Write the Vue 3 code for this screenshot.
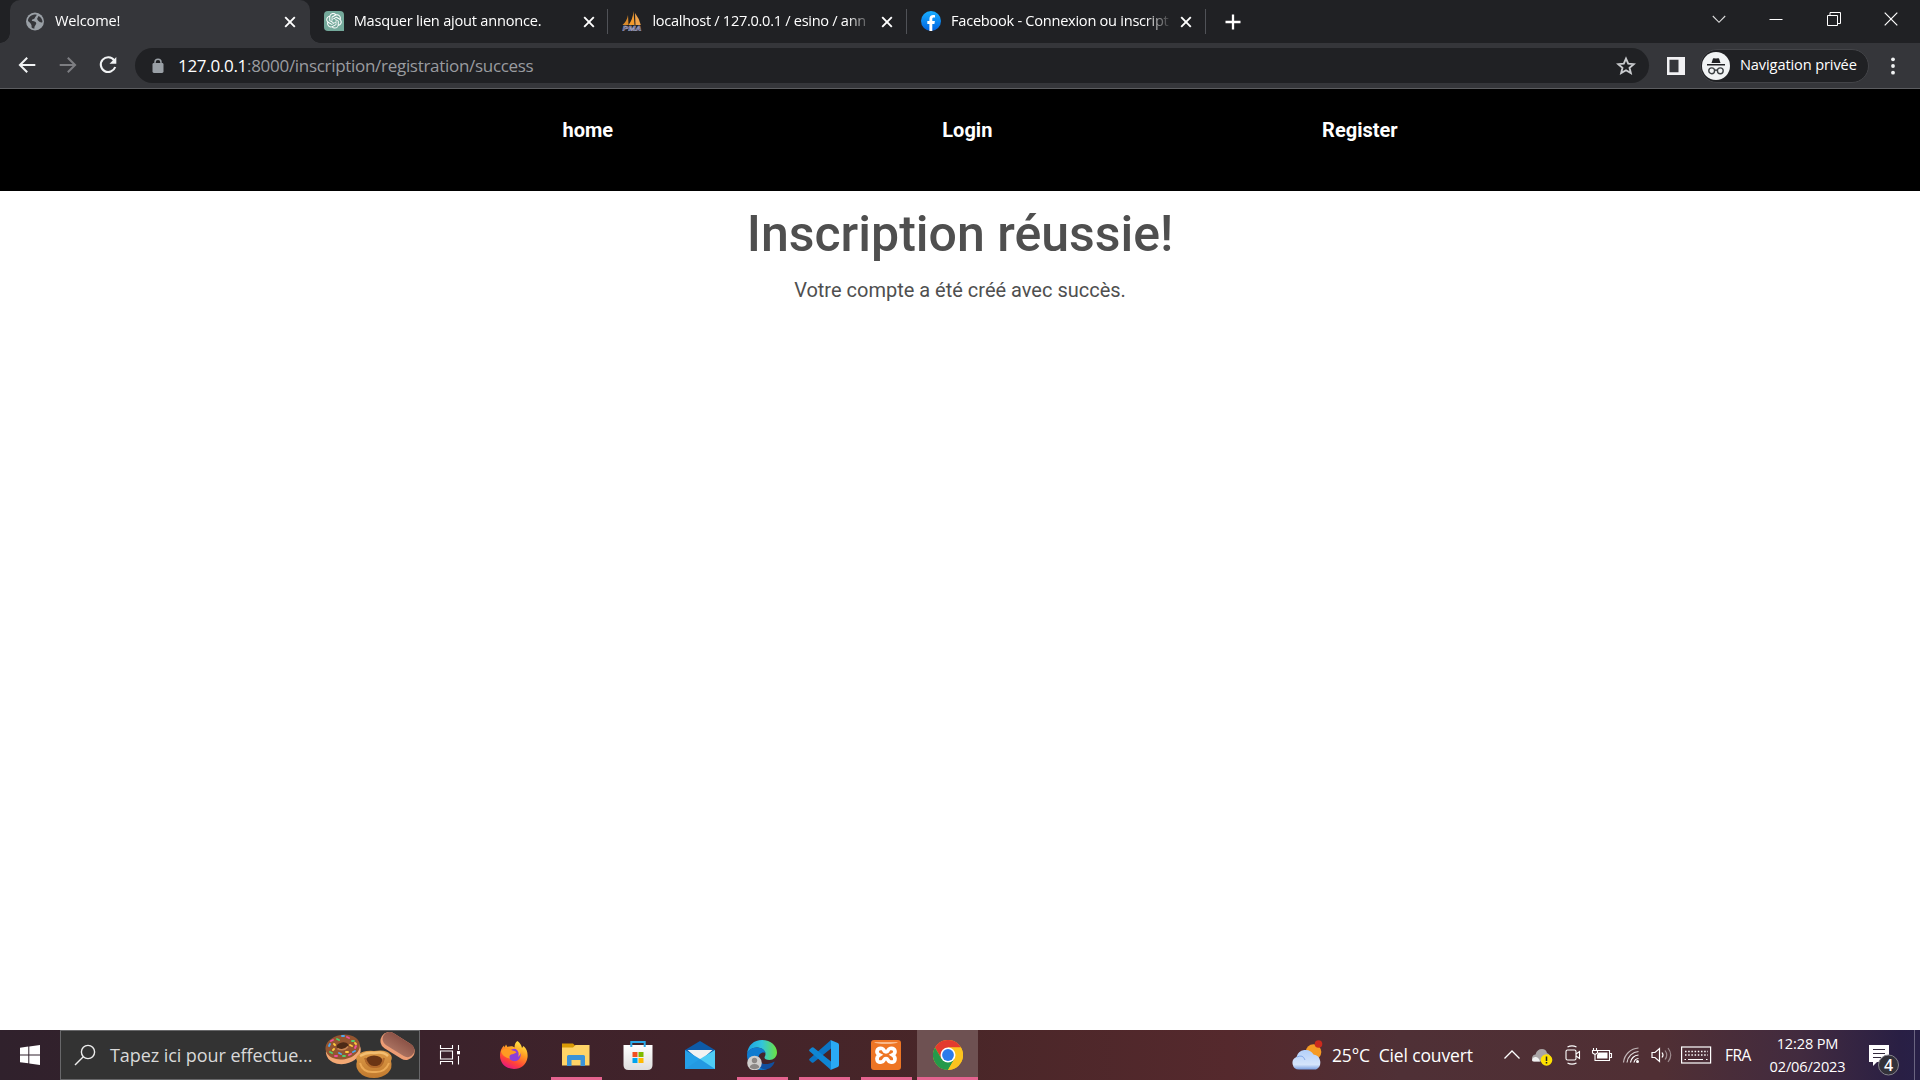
<script setup>
const tabs = [
  { id: 'globe', title: 'Welcome!', active: true, ls: '-0.18px' },
  { id: 'gpt', title: 'Masquer lien ajout annonce.', ls: '-0.22px' },
  { id: 'pma', title: 'localhost / 127.0.0.1 / esino / ann', ls: '-0.3px' },
  { id: 'fb', title: 'Facebook - Connexion ou inscript', ls: '-0.27px' },
]
const links = ['home', 'Login', 'Register']
</script>

<template>
  <div class="screen">
    <div class="strip">
      <div v-for="t in tabs" :key="t.id" class="tab" :class="{ active: t.active }">
        <svg v-if="t.id === 'globe'" class="fav" viewBox="0 0 20 20">
          <circle cx="10" cy="10.5" r="9" fill="#9aa0a6" />
          <path d="M3 10 C3 6 7 3.200 11.500 3.600 C12 5 10 5.500 9.800 7 C9.500 8.300 7 8 6.800 9.300 C6.900 10.600 10.500 9.800 11.200 12 C11.500 14 9 14.500 9.500 17.600 C8 17.500 7 17 6.500 16.300 C7.300 14 5.500 12 3 10Z M13.500 5 C16 6 17.500 8.500 17.500 11 C16.500 12.200 14.500 11 13.500 10 C12.500 8.800 11.500 7.800 12.500 7Z" fill="#35363a" />
        </svg>
        <svg v-else-if="t.id === 'gpt'" class="fav" viewBox="0 0 20 20">
          <path d="M4 0H16A4 4 0 0 1 20 4V20H4A4 4 0 0 1 0 16V4A4 4 0 0 1 4 0Z" fill="#74a99b" />
          <path transform="translate(2.200 2) scale(.65)" fill="#fff" d="M22.2819 9.8211a5.9847 5.9847 0 0 0-.5157-4.9108 6.0462 6.0462 0 0 0-6.5098-2.9A6.0651 6.0651 0 0 0 4.9807 4.1818a5.9847 5.9847 0 0 0-3.9977 2.9 6.0462 6.0462 0 0 0 .7427 7.0966 5.98 5.98 0 0 0 .511 4.9107 6.051 6.051 0 0 0 6.5146 2.9001A5.9847 5.9847 0 0 0 13.2599 24a6.0557 6.0557 0 0 0 5.7718-4.2058 5.9894 5.9894 0 0 0 3.9977-2.9001 6.0557 6.0557 0 0 0-.7475-7.073zm-9.022 12.6081a4.4755 4.4755 0 0 1-2.8764-1.0408l.1419-.0804 4.7783-2.7582a.7948.7948 0 0 0 .3927-.6813v-6.7369l2.02 1.1686a.071.071 0 0 1 .038.0615v5.5826a4.504 4.504 0 0 1-4.4945 4.4944zm-9.6607-4.1254a4.4708 4.4708 0 0 1-.5346-3.0137l.142.0852 4.783 2.7582a.7712.7712 0 0 0 .7806 0l5.8428-3.3685v2.3324a.0804.0804 0 0 1-.0332.0615L9.74 19.9502a4.4992 4.4992 0 0 1-6.1408-1.6464zM2.3408 7.8956a4.485 4.485 0 0 1 2.3655-1.9728V11.6a.7664.7664 0 0 0 .3879.6765l5.8144 3.3543-2.0201 1.1685a.0757.0757 0 0 1-.071 0l-4.8303-2.7865A4.504 4.504 0 0 1 2.3408 7.872zm16.5963 3.8558L13.1038 8.364 15.1192 7.2a.0757.0757 0 0 1 .071 0l4.8303 2.7913a4.4944 4.4944 0 0 1-.6765 8.1042v-5.6772a.79.79 0 0 0-.407-.667zm2.0107-3.0231l-.142-.0852-4.7735-2.7818a.7759.7759 0 0 0-.7854 0L9.409 9.2297V6.8974a.0662.0662 0 0 1 .0284-.0615l4.8303-2.7866a4.4992 4.4992 0 0 1 6.6802 4.66zM8.3065 12.863l-2.02-1.1638a.0804.0804 0 0 1-.038-.0567V6.0742a4.4992 4.4992 0 0 1 7.3757-3.4537l-.142.0805L8.704 5.459a.7948.7948 0 0 0-.3927.6813zm1.0976-2.3654l2.602-1.4998 2.6069 1.4998v2.9994l-2.5974 1.4997-2.6067-1.4997Z" />
        </svg>
        <svg v-else-if="t.id === 'pma'" class="fav" viewBox="0 0 20 20">
          <path d="M6 4 L6.500 14 H.5 Q5 10 6 4Z" fill="#d98a2b" />
          <path d="M11.500 0 L12.500 14 H6.500 Q11 8 11.500 0Z" fill="#f39a2c" />
          <path d="M13 2 Q17 7 18.800 14 H13.500Z" fill="#f0a34a" />
          <text x="10" y="19.600" text-anchor="middle" textLength="19" lengthAdjust="spacingAndGlyphs" font-family="Liberation Sans" font-weight="bold" font-style="italic" font-size="8" fill="#33345e" stroke="#b4b4d0" stroke-width=".5">PMA</text>
        </svg>
        <svg v-else class="fav" viewBox="0 0 20 20">
          <defs><linearGradient id="fbg" x2="0" y2="1"><stop stop-color="#19afff" /><stop offset="1" stop-color="#0062e0" /></linearGradient></defs>
          <circle cx="10" cy="10" r="10" fill="url(#fbg)" />
          <path d="M8.400 19.900 V12.900 H6.300 V10 H8.400 V8 C8.400 5.300 10 4 12.200 4 C13 4 14 4.200 14 4.200 V6.600 H12.700 C11.600 6.600 11.300 7.300 11.300 8.100 V10 H13.900 L13.400 12.900 H11.300 V19.900Z" fill="#fff" />
        </svg>
        <span class="title" :style="{ letterSpacing: t.ls }">{{ t.title }}</span>
        <svg class="x" viewBox="0 0 12 12"><path d="M1.200 1.200 10.800 10.800 M10.800 1.200 1.200 10.800" stroke="#fff" stroke-width="1.900" /></svg>
      </div>
      <svg class="plus" viewBox="0 0 16 16"><path d="M8 .5V15.500M.5 8H15.500" stroke="#fff" stroke-width="2.300" /></svg>
      <div class="controls">
        <svg viewBox="0 0 14 14"><path d="M.8 4 7 10.300 13.200 4" stroke="#ddd" fill="none" stroke-width="1.100" /></svg>
        <svg viewBox="0 0 14 14"><path d="M.5 7.500H13.500" stroke="#fff" /></svg>
        <svg viewBox="0 0 14 14"><path d="M.5 3.500H10.500V13.500H.5ZM3 3V.5H13.500V11.500H11" stroke="#fff" fill="none" /></svg>
        <svg viewBox="0 0 14 14"><path d="M.7 .7 13.300 13.300M13.300 .7 .7 13.300" stroke="#fff" stroke-width="1.200" /></svg>
      </div>
    </div>

    <div class="toolbar">
      <svg class="nav" viewBox="0 0 20 20"><path d="M18.300 10H3M10.200 2.700 2.900 10l7.300 7.300" stroke="#f1f3f4" fill="none" stroke-width="2" /></svg>
      <svg class="nav" viewBox="0 0 20 20"><path d="M1.700 10H17M9.800 2.700 17.100 10l-7.300 7.300" stroke="#7d7e82" fill="none" stroke-width="2" /></svg>
      <svg class="nav" viewBox="0 0 20 20"><path d="M16.200 5.300A7.400 7.400 0 1 0 17.200 12" stroke="#f1f3f4" fill="none" stroke-width="2.100" /><path d="M18.300 2V8.800H11.500Z" fill="#f1f3f4" /></svg>
      <div class="omnibox">
        <svg class="lock" viewBox="0 0 12 16"><path d="M3 6.500V4.200a3 3 0 0 1 6 0V6.500" stroke="#9aa0a6" fill="none" stroke-width="1.500" /><rect x=".5" y="5" width="11" height="10" rx="1.400" fill="#9aa0a6" /></svg>
        <span class="url"><b>127.0.0.1</b>:8000/inscription/registration/success</span>
        <svg class="star" viewBox="0 0 20 20"><path d="M10 3.200 12 7.900 17 8.300 13.200 11.600 14.400 16.500 10 13.900 5.600 16.500 6.800 11.600 3 8.300 8 7.900Z" stroke="#c9cbce" fill="none" stroke-width="1.700" /></svg>
      </div>
      <svg class="panel" viewBox="0 0 18 18"><path d="M0 0H18V18H0ZM2.500 2.800V15.200H11.500V2.800Z" fill="#f1f1f3" fill-rule="evenodd" /></svg>
      <div class="incog">
        <svg viewBox="0 0 28 28">
          <circle cx="14" cy="14" r="14" fill="#f1f3f4" />
          <path d="M9.500 11 11 6.600Q11.200 6 12 6.200L14 6.600 16 6.200Q16.800 6 17 6.600L18.500 11Z M5 12H23V13.600H5Z" fill="#202124" />
          <g fill="none" stroke="#3c4043" stroke-width="1.400"><circle cx="9.700" cy="18.800" r="2.900" /><circle cx="18.300" cy="18.800" r="2.900" /><path d="M12.600 18.500Q14 17.500 15.400 18.500" /></g>
        </svg>
        <span>Navigation privée</span>
      </div>
      <svg class="dots" viewBox="0 0 4 18"><g fill="#f1f3f4"><circle cx="2" cy="2.300" r="1.900" /><circle cx="2" cy="9" r="1.900" /><circle cx="2" cy="15.700" r="1.900" /></g></svg>
    </div>

    <nav class="sitenav"><a v-for="l in links" :key="l">{{ l }}</a></nav>
    <main>
      <h1>Inscription réussie!</h1>
      <p>Votre compte a été créé avec succès.</p>
    </main>

    <footer class="taskbar">
      <div class="start"><svg width="20" height="20" viewBox="0 0 20 20"><path d="M0 2.800 8.300 1.600V9.400H0ZM9.300 1.400 20 0V9.400H9.300ZM0 10.400H8.300V18.300L0 17.200ZM9.300 10.400H20V20L9.300 18.500Z" fill="#fff" /></svg></div>
      <div class="search">
        <svg width="22" height="22" viewBox="0 0 22 22"><g fill="none" stroke="#eee" stroke-width="1.400"><circle cx="14" cy="8" r="6.600" /><path d="M9.300 12.700 1 21" /></g></svg>
        <span>Tapez ici pour effectue...</span>
        <svg class="donuts" width="91" height="48" viewBox="0 0 91 48">
          <defs>
            <linearGradient id="ecl" x2="0" y2="1"><stop stop-color="#8c5347" /><stop offset="1" stop-color="#a8705f" /></linearGradient>
            <linearGradient id="old" x2="0" y2="1"><stop stop-color="#dd9a47" /><stop offset="1" stop-color="#c17a2f" /></linearGradient>
          </defs>
          <g transform="rotate(-10 18 17)">
            <ellipse cx="18" cy="19" rx="17.500" ry="13" fill="#f3a873" />
            <ellipse cx="18" cy="15" rx="17.300" ry="12.300" fill="#935530" />
            <ellipse cx="18" cy="14" rx="6" ry="3.600" fill="#4d2a16" />
            <path d="M12.500 15.500Q18 20 23.500 15.500" stroke="#c98552" stroke-width="1.500" fill="none" />
          </g>
          <g stroke-width="1.900" stroke-linecap="round">
            <path d="M6 9l2-1M22 5l2 1M30 16l1-2M10 24l2 0M24 23l2-1" stroke="#f04f9c" />
            <path d="M12 7l2 1M27 9l2 0M5 20l2 1M18 24l2 0" stroke="#51d06b" />
            <path d="M17 4l2 0M4 14l1-2M28 20l2-1M14 21l2 1" stroke="#4da8f0" />
            <path d="M9 12l1 1M25 13l2 1M8 18l1-1M21 20l2 0M30 11l1 1" stroke="#ffc93e" />
          </g>
          <g transform="rotate(32 72 14)">
            <rect x="54" y="5" width="37" height="17.500" rx="8.500" fill="#ed9c74" />
            <rect x="55" y="5" width="35" height="14" rx="7" fill="url(#ecl)" />
          </g>
          <path d="M33 23Q38 18 49 19Q61 17 65 22Q68 25 66 29Q68 36 63 41Q57 46 49 46Q39 46 34 40Q30 35 32 29Q30 26 33 23Z" fill="url(#old)" />
          <path d="M35 24Q42 20 49 21Q58 19 63 24" fill="none" stroke="#f2bd70" stroke-width="2.500" />
          <ellipse cx="49" cy="29" rx="8.500" ry="5.500" fill="#6b3514" />
          <path d="M40 26Q43 36 50 35Q57 36 59 26" fill="none" stroke="#b2692b" stroke-width="2" />
          <path d="M35 31Q38 41 49 40Q60 41 64 31" fill="none" stroke="#eba955" stroke-width="2" />
        </svg>
      </div>
      <div class="view"><svg width="22" height="20" viewBox="0 0 22 20"><g stroke="#fff" fill="none" stroke-width="1.100"><path d="M1.500 0V3.500H13.500V0M1.500 19.500V16.500H13.500V19.500M1.500 6H13.500V14H1.500ZM19.500 0V5M19.500 11V19.500" /></g><path d="M18 6H21V9.300H18Z" fill="#fff" /></svg></div>

      <div class="app"><svg viewBox="0 0 30 30">
        <defs><linearGradient id="ff" x1=".8" x2=".3" y2="1"><stop stop-color="#fff24a" /><stop offset=".4" stop-color="#ff9a22" /><stop offset=".75" stop-color="#ff4139" /><stop offset="1" stop-color="#e31587" /></linearGradient></defs>
        <path d="M18.500 1C21 3 22.500 5 23 8L24.500 6C28 9 29 13 28.500 17.500C27.500 24.500 22 29 15 29C7 29 1 23.500 1 15.500C1 11 2.500 8 5 5.500L5.500 7.500L7 4.500L8.500 7C11 6 14 6 15.500 7.500C15.500 4.500 16.500 2 18.500 1Z" fill="url(#ff)" />
        <circle cx="15.500" cy="15" r="6.200" fill="#8c3fd8" /><path d="M1.800 11Q6 7 13.500 10.500Q17 11 17.500 12.500Q14 14.500 12 14.500Q9.500 16 11 18.500Q4 18 1.800 11Z" fill="#ff9a22" /><path d="M17 9Q21 12 19 17Q24 13 20 8Z" fill="#ffb52e" />
      </svg></div>
      <div class="app open"><svg viewBox="0 0 30 30"><path d="M1 3.500H12L14.500 6H26V12H1Z" fill="#d99a05" /><path d="M1 7.500H12L14.500 5H28.500V25.500H1Z" fill="#ffd467" /><path d="M6 26V16.500Q6 15 7.500 15H22.500Q24 15 24 16.500V26H19.500V20H10.500V26Z" fill="#3b93d8" /></svg></div>
      <div class="app"><svg viewBox="0 0 30 30"><defs><linearGradient id="ms" x2="0" y2="1"><stop stop-color="#fff" /><stop offset="1" stop-color="#dedede" /></linearGradient></defs><path d="M.5 5H29.500V25Q29.500 30 24.500 30H5.500Q.5 30 .5 25Z" fill="url(#ms)" /><path d="M8.300 7V2H21.700V7" fill="none" stroke="#29a9ea" stroke-width="2" /><path d="M9.500 12H14.500V17H9.500Z" fill="#f25022" /><path d="M15.500 12H20.500V17H15.500Z" fill="#7fba00" /><path d="M9.500 18H14.500V23H9.500Z" fill="#00a4ef" /><path d="M15.500 18H20.500V23H15.500Z" fill="#ffb900" /></svg></div>
      <div class="app"><svg viewBox="0 0 30 30"><path d="M0 10 15 1 30 10V20H0Z" fill="#0d5aa7" /><path d="M2.500 10H27.500L15 21Z" fill="#f2f2f2" /><path d="M0 10 15 19V29H0Z" fill="#25a0e8" /><path d="M30 10 15 19 15 29H30Z" fill="#4fcdf6" /><path d="M15 19 30 29H0Z" fill="#2399e2" /></svg></div>
      <div class="app open"><svg viewBox="0 0 30 30">
        <defs><linearGradient id="ed"><stop stop-color="#1ba1e2" /><stop offset=".5" stop-color="#32c5dc" /><stop offset="1" stop-color="#6be33f" /></linearGradient></defs>
        <path d="M0 14C1 5 7 0 15 0C24 0 30 6 30 12.500C30 17 26.500 20 22.500 20C19 20 17.500 19 17.500 17.500C17.500 16.500 18.500 16 18.500 14C18.500 10 14 7.500 10 7.500C5 7.500 1 10.500 0 14Z" fill="url(#ed)" />
        <path d="M0 15C0 10 5 7.500 10 7.500C14.500 7.500 18 10 18.500 13C15 11.500 11.500 14 11.500 18C11.500 24 16 28 21 28.500C19 29.600 17 30 15 30C6 30 0 23.500 0 15Z" fill="#0f7bd0" />
        <path d="M12 16C11 23 17 27 27.500 21.500C27.500 24 24 29 18.500 29.500C10 29 7 20 12 16Z" fill="#114f9e" />
        <circle cx="7.500" cy="23" r="7.300" fill="#d0cecc" /><circle cx="7.500" cy="20.500" r="2.700" fill="#8b8785" /><path d="M2.700 27.500Q3 24 7.500 24T12.300 27.500Q7.500 31 2.700 27.500Z" fill="#8b8785" />
      </svg></div>
      <div class="app open"><svg viewBox="0 0 30 30"><path d="M22 0V8.500L4.500 22.500Q3.500 23.200 2.500 22.300L.5 20.500Q-.3 19.500 .6 18.700Z" fill="#0b74c4" /><path d="M22 30V21.500L4.500 7.500Q3.500 6.800 2.500 7.700L.5 9.500Q-.3 10.500 .6 11.300Z" fill="#0f86d4" /><path d="M21.500 0 28.800 3Q30 3.600 30 5V25Q30 26.400 28.800 27L21.500 30Q22 29.500 22 28V2Q22 .5 21.500 0Z" fill="#2aaaf5" /></svg></div>
      <div class="app open"><svg viewBox="0 0 30 30"><rect width="30" height="30" rx="3" fill="#ee7524" /><path d="M3 2H27Q25 4 15 4T3 2Z" fill="#f9b88a" /><path d="M11 8.500C5.500 7.500 4.500 13 8.500 15C4.500 17.500 5.500 23 10.500 22C13.500 21.500 12.500 18.500 15 18.500C17.500 18.500 16.500 21.500 19.500 22C24.500 23 25.500 17.500 21.500 15C25.500 13 24.500 7.500 19 8.500C16.500 9 17.500 12 15 12C12.500 12 13.500 9 11 8.500Z" fill="none" stroke="#fff" stroke-width="3.700" /></svg></div>
      <div class="app open current"><svg viewBox="0 0 30 30"><circle cx="15" cy="15" r="15" fill="#fcc31e" /><path d="M2 7.500A15 15 0 0 1 28 7.500H15L8.500 18.700Z" fill="#e33b2e" /><path d="M2 7.500A15 15 0 0 0 15 30L21.500 18.700H8.500Z" fill="#24994a" /><path d="M15 7.500H28A15 15 0 0 1 15 30L21.500 18.700Z" fill="#fcc31e" /><circle cx="15" cy="15" r="7.500" fill="#fff" /><circle cx="15" cy="15" r="5.900" fill="#2b7bea" /></svg></div>

      <div class="weather">
        <svg width="31" height="31" viewBox="0 0 31 31">
          <defs><linearGradient id="cl" x2="0" y2="1"><stop stop-color="#b3d0fa" /><stop offset=".75" stop-color="#d5e4fb" /><stop offset="1" stop-color="#7a9fe0" /></linearGradient></defs>
          <circle cx="21.500" cy="12" r="7.800" fill="#f59a24" /><circle cx="26.500" cy="4" r="3.800" fill="#cb2a1d" />
          <path d="M7 29.500A6.500 6.500 0 0 1 4.500 17A9.300 9.300 0 0 1 21.500 14.500A8 8 0 0 1 24 29.500Z" fill="url(#cl)" />
          <path d="M5 17Q11 14 13 20" stroke="#84abea" fill="none" />
        </svg>
        <span>25°C&nbsp; Ciel couvert</span>
      </div>

      <div class="tray">
        <svg style="width:30px" viewBox="0 0 30 24"><path d="M7.500 15.500 15 8 22.500 15.500" stroke="#fff" fill="none" stroke-width="1.300" /></svg>
        <svg style="width:31px" viewBox="0 0 31 24"><path d="M7 18.500Q4.500 18 5 14.500Q6 11.500 8.500 11.500Q10 6 15 6Q19 6 20 10Q23 11 23 14V18.500Z" fill="#a9a4a5" /><path d="M5 17Q6 13.500 9 14Q12 14.500 13 18.500H7Q5 18.500 5 17Z" fill="#f1f1f1" /><circle cx="19.500" cy="17" r="5.800" fill="#ffe100" /><path d="M19.500 13.500V18M19.500 19V20.500" stroke="#222" stroke-width="1.500" /></svg>
        <svg style="width:30px" viewBox="0 0 30 24"><g stroke="#fff" fill="none" stroke-width="1.100"><rect x="8" y="7" width="10" height="10" rx="1.500" /><path d="M18 11 21.500 8.500V15.500L18 13M9.500 4Q14 1.700 18.500 4M9.500 20Q14 22.300 18.500 20" /></g></svg>
        <svg style="width:30px" viewBox="0 0 30 24"><path d="M10 7.500H21.500V17.500H6.500M22 10.500H23.500V14.500H22M5.500 5V7M8.500 5V7M4.500 7.500H9.500V10L7 11.500 4.500 10ZM7 11.500V17.500" stroke="#fff" fill="none" stroke-width="1.100" /><path d="M10.500 9.500H19.500V15.500H9V12Z" fill="#fff" /></svg>
        <svg style="width:30px" viewBox="0 0 30 24"><g stroke="#fff" fill="none" stroke-width="1.200"><path d="M16 19.500A5 5 0 0 1 20.500 15.500" /><path d="M12.500 19.500A8.500 8.500 0 0 1 20.500 12" /><path d="M9 19.500A12.500 12.500 0 0 1 20.500 8.500" opacity=".8" /><path d="M5.500 19.500A16 16 0 0 1 20.500 5" opacity=".65" /></g><circle cx="19.500" cy="18.500" r="1.500" fill="#fff" /></svg>
        <svg style="width:28px" viewBox="0 0 28 24"><g stroke="#fff" fill="none" stroke-width="1.200"><path d="M4 9.500H7L11.500 5.500V18.500L7 14.500H4Z" /><path d="M14 9.500Q16 12 14 14.500" /><path d="M17 7.500Q20.500 12 17 16.500M20 5Q25.500 12 20 19" opacity=".45" /></g></svg>
        <svg style="width:38px" viewBox="0 0 38 24"><rect x="5.600" y="4" width="29" height="16" fill="none" stroke="#fff" stroke-width="1.200" /><path d="M9 8.500H32M9 12H32" stroke="#fff" stroke-width="1.300" stroke-dasharray="1.500 1.700" /><path d="M12 16.500H27M8.500 16.500H10M30 16.500H31.500" stroke="#fff" stroke-width="1.200" /></svg>
      </div>
      <span class="lang">FRA</span>
      <div class="clock"><span>12:28 PM</span><span>02/06/2023</span></div>
      <div class="notif">
        <svg width="32" height="32" viewBox="0 0 32 32"><path d="M0 0H20V17H8L4 21V17H0Z" fill="#fff" /><path d="M4 4.500H16M4 8.500H16M4 12.500H12" stroke="#332a3d" stroke-width="1.200" /><circle cx="19.500" cy="20" r="10" fill="#33323a" stroke="#85838b" /><text x="19.500" y="25.500" text-anchor="middle" font-family="Open Sans" font-weight="600" font-size="16" fill="#fff">4</text></svg>
      </div>
      <div class="peek"></div>
    </footer>
  </div>
</template>

<style>
body { margin: 0; overflow: hidden; }
</style>

<style scoped>
* { box-sizing: border-box; }
svg { flex: none; display: block; }
span { white-space: nowrap; }
.screen { width: 1920px; height: 1080px; display: flex; flex-direction: column; background: #fff; font-family: "Open Sans", "Noto Sans", sans-serif; overflow: hidden; }

.strip { height: 43px; flex: none; background: #202124; display: flex; align-items: center; padding-left: 10px; }
.tab { position: relative; width: 298.700px; height: 43px; display: flex; align-items: center; padding-left: 15px; flex: none; color: #fff; }
.tab:not(.active)::after { content: ""; position: absolute; right: -1px; top: 9px; width: 1px; height: 25px; background: #505257; }
.tab.active { background: #35363a; border-radius: 10px 10px 0 0; width: 300px; margin-right: -1.300px; }
.tab.active::before, .tab.active::after { content: ""; position: absolute; bottom: 0; width: 10px; height: 10px; }
.tab.active::before { left: -10px; background: radial-gradient(circle at 0 0, transparent 9.500px, #35363a 10px); }
.tab.active::after { right: -10px; background: radial-gradient(circle at 100% 0, transparent 9.500px, #35363a 10px); }
.fav { width: 20px; height: 20px; margin-top: -1px; }
.title { margin-left: 10px; width: 221px; font-size: 14.600px; line-height: 22px; margin-top: -3px; -webkit-mask-image: linear-gradient(90deg, #000 195px, transparent 221px); }
.x { width: 12px; height: 12px; margin-left: 8px; }
.plus { width: 16px; height: 16px; margin-left: 20.500px; }
.controls { margin-left: auto; display: flex; gap: 43.500px; padding-right: 22px; margin-top: -6px; }
.controls svg { width: 14px; height: 14px; }

.toolbar { height: 46px; flex: none; background: #35363a; border-bottom: 1px solid #5c5d60; display: flex; align-items: center; padding-left: 17px; }
.nav { width: 20px; height: 20px; margin-right: 20.500px; margin-top: -1px; }
.nav + .nav + .nav { margin-right: 17px; }
.omnibox { width: 1514px; height: 35px; border-radius: 18px; background: #202124; display: flex; align-items: center; padding-left: 17px; flex: none; }
.lock { width: 12px; height: 16px; }
.url { margin-left: 14px; font-size: 17px; letter-spacing: -.3px; color: #9a9ca0; line-height: 24px; }
.url b { font-weight: 400; color: #fff; }
.star { width: 22px; height: 22px; margin-left: auto; margin-right: 12px; }
.panel { width: 18px; height: 18px; margin-left: 18px; }
.incog { margin-left: 15px; width: 169px; height: 34px; border-radius: 17px; border: 1px solid #434448; background: #202124; display: flex; align-items: center; padding-left: 1px; color: #fff; font-size: 14.600px; letter-spacing: -.12px; }
.incog svg { width: 28px; height: 28px; }
.incog span { margin-left: 10px; margin-top: -3px; }
.dots { width: 4px; height: 18px; margin-left: 21.500px; }

.sitenav { height: 102px; flex: none; background: #000; display: grid; grid-template-columns: repeat(3, 379.800px); padding: 29px 0 0 562.500px; }
.sitenav a { color: #fff; font: 700 20px/24px Roboto, sans-serif; }
main { flex: 1; text-align: center; color: #4f4f4f; font-family: Roboto, sans-serif; }
h1 { margin: 13px 0 0; font-size: 50px; line-height: 60px; font-weight: 500; }
p { margin: 10px 0 0; font-size: 20px; line-height: 32px; }

.taskbar { height: 50px; flex: none; display: flex; align-items: stretch; background: linear-gradient(90deg, #30212c 0, #3b222b 450px, #42232a 700px, #492628 950px, #55292d 1230px, #4f3036 1400px, #502f34 1660px, #422b3f 1800px, #291f44 1900px, #282047 1920px); color: #fff; }
.start { width: 60px; display: flex; align-items: center; justify-content: center; }
.search { position: relative; width: 360px; border: 1px solid #68686a; background: #333; display: flex; align-items: center; padding-left: 13px; color: #d9d9d9; font-size: 18px; }
.search span { margin-left: 14px; letter-spacing: -.07px; }
.donuts { position: absolute; right: 3px; top: 1px; }
.view { width: 60px; display: flex; align-items: center; justify-content: center; margin-right: 3px; }
.app { position: relative; width: 62px; display: flex; align-items: center; justify-content: center; }
.app svg { width: 30px; height: 30px; }
.app.open::after { content: ""; position: absolute; left: 6px; right: 5px; bottom: 0; height: 3px; background: #e4638f; }
.app.current { background: #6e5152; width: 61px; }
.app.current::after { left: 0; right: 0; }
.weather { margin-left: 314px; width: 205px; display: flex; align-items: center; font-size: 17.500px; }
.weather span { margin-left: 9px; letter-spacing: -.15px; }
.tray { display: flex; align-items: center; }
.tray svg { height: 24px; }
.lang { align-self: center; margin-left: 11px; width: 40px; font-size: 15.500px; letter-spacing: -.5px; }
.clock { width: 85px; display: flex; flex-direction: column; align-items: center; justify-content: center; font-size: 14.600px; line-height: 23px; letter-spacing: -.15px; }
.notif { margin-left: auto; padding-top: 15px; }
.peek { width: 6px; margin-left: 13px; border-left: 1px solid #6a6480; }
</style>
